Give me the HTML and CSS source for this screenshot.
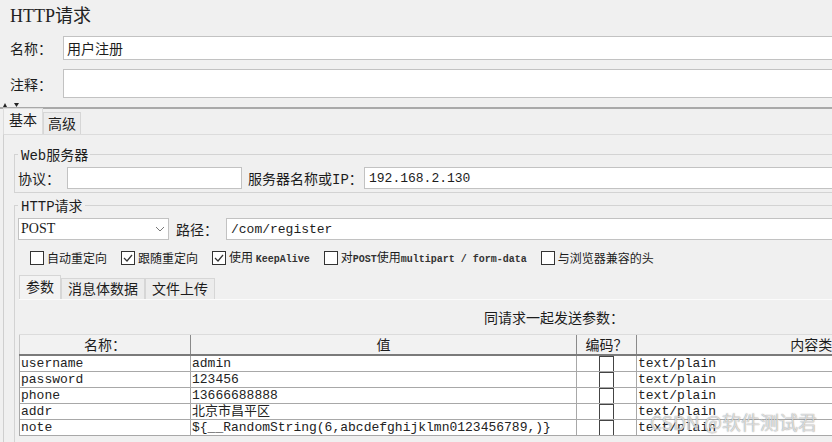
FILE: index.html
```html
<!DOCTYPE html>
<html lang="zh">
  <head>
    <meta charset="UTF-8" />
    <title>HTTP请求</title>
    <link rel="stylesheet" href="styles.css">
  </head>
  <body>
    <div class="page">
      <h1 class="title">HTTP请求</h1>

      <!-- name / comment -->
      <div class="row row-name">
        <span class="label">名称：</span>
        <div class="field">用户注册</div>
      </div>
      <div class="row row-note">
        <span class="label">注释：</span>
        <div class="field"></div>
      </div>

      <div class="splitter">
        <svg width="20" height="5" viewBox="0 0 20 5">
          <path d="M3 5 L5 1 L7 5 Z" fill="#222" />
          <path d="M14 1 L19 1 L16.5 5 Z" fill="#222" />
        </svg>
      </div>

      <div class="tabs">
        <span class="tab active">基本</span>
        <span class="tab">高级</span>
      </div>

      <div class="tabpanel">
        <fieldset class="group group-web">
          <legend><span class="mono">Web</span>服务器</legend>
          <div class="line">
            <span class="lbl lbl-proto">协议：</span>
            <div class="field field-proto"></div>
            <span class="lbl lbl-server">服务器名称或<span class="mono">IP</span>：</span>
            <div class="field field-grow mono">192.168.2.130</div>
          </div>
        </fieldset>

        <fieldset class="group group-http">
          <legend><span class="mono">HTTP</span>请求</legend>
          <div class="line">
            <div class="select">
              <span>POST</span>
              <svg width="10" height="6" viewBox="0 0 10 6">
                <path d="M1 1 L5 5 L9 1" fill="none" stroke="#777" stroke-width="1" />
              </svg>
            </div>
            <span class="lbl lbl-path">路径：</span>
            <div class="field field-grow mono">/com/register</div>
          </div>

          <div class="checks">
            <label class="check"><span class="box"></span><span>自动重定向</span></label>
            <label class="check"><span class="box"><svg width="12" height="12" viewBox="0 0 12 12"><path d="M2 6 L5 9 L10 3" fill="none" stroke="#333" stroke-width="1.2" /></svg></span><span>跟随重定向</span></label>
            <label class="check"><span class="box"><svg width="12" height="12" viewBox="0 0 12 12"><path d="M2 6 L5 9 L10 3" fill="none" stroke="#333" stroke-width="1.2" /></svg></span><span>使用 <span class="tiny">KeepAlive</span></span></label>
            <label class="check"><span class="box"></span><span>对<span class="tiny">POST</span>使用<span class="tiny">multipart / form-data</span></span></label>
            <label class="check"><span class="box"></span><span>与浏览器兼容的头</span></label>
          </div>

          <div class="subtabs">
            <span class="subtab active">参数</span>
            <span class="subtab">消息体数据</span>
            <span class="subtab">文件上传</span>
          </div>

          <div class="subpanel">
            <div class="caption">同请求一起发送参数：</div>
            <table class="params">
              <colgroup>
                <col class="c-name" />
                <col class="c-value" />
                <col class="c-enc" />
                <col class="c-type" />
              </colgroup>
              <thead>
                <tr>
                  <th>名称：</th>
                  <th>值</th>
                  <th>编码？</th>
                  <th>内容类型</th>
                </tr>
              </thead>
              <tbody>
                <tr><td>username</td><td>admin</td><td class="enc"><span class="ebox"></span></td><td>text/plain</td></tr>
                <tr><td>password</td><td>123456</td><td class="enc"><span class="ebox"></span></td><td>text/plain</td></tr>
                <tr><td>phone</td><td>13666688888</td><td class="enc"><span class="ebox"></span></td><td>text/plain</td></tr>
                <tr><td>addr</td><td>北京市昌平区</td><td class="enc"><span class="ebox"></span></td><td>text/plain</td></tr>
                <tr><td>note</td><td>${__RandomString(6,abcdefghijklmn0123456789,)}</td><td class="enc"><span class="ebox"></span></td><td>text/plain</td></tr>
              </tbody>
            </table>
          </div>
        </fieldset>
      </div>
    </div>

    <div class="watermark">CSDN @软件测试君</div>
  </body>
</html>
```

FILE: styles.css
```css
body {
  margin: 0;
  background: #f0f0f0;
  font-family: "Noto Sans CJK SC", sans-serif;
  color: #1c1c1c;
  overflow: hidden;
}
.page {
  width: 1010px;
}
.mono {
  font-family: "Liberation Mono", "Noto Sans CJK SC", monospace;
}
.title {
  margin: 0;
  height: 36px;
  padding-left: 10px;
  font-family: "Liberation Serif", "Noto Sans CJK SC", serif;
  font-size: 18px;
  font-weight: normal;
  line-height: 33px;
  color: #222;
}

/* name + comment rows */
.row {
  display: flex;
  align-items: center;
  padding-left: 10px;
}
.row-name {
  height: 24px;
}
.row-note {
  height: 29px;
  margin-top: 9px;
}
.label {
  width: 53px;
  font-size: 14px;
}
.field {
  box-sizing: border-box;
  height: 100%;
  flex: 1;
  background: #fff;
  border: 1px solid #c2c2c2;
  padding-left: 3px;
  font-size: 14px;
  display: flex;
  align-items: center;
}
.splitter {
  height: 5px;
  margin-top: 4px;
  border-bottom: 2px solid #a9a9a9;
  display: flex;
}
.splitter svg {
  display: block;
}

/* main tabs */
.tabs {
  display: flex;
  align-items: flex-end;
  height: 25px;
  padding-left: 3px;
}
.tab {
  height: 21px;
  padding: 0 4px;
  border: 1px solid #d6d6d6;
  border-bottom: none;
  font-size: 14px;
  line-height: 20px;
  background: #ececec;
}
.tab.active {
  height: 25px;
  padding: 0 5px;
  background: #f3f3f3;
  border-color: #dcdcdc;
}
.tabpanel {
  margin-left: 3px;
  border-top: 1px solid #dcdcdc;
  border-left: 1px solid #cfcfcf;
  padding: 12px 0 0 10px;
}

/* grouped boxes */
.group {
  margin: 0;
  padding: 6px 0 3px 3px;
  border: 1px solid #d3d3d3;
  min-width: 0;
}
.group legend {
  display: block;
  height: 14px;
  padding: 0 2px 0 3px;
  font-size: 14px;
  line-height: 14px;
  overflow: visible;
}
.group-http {
  margin-top: 5px;
  padding-top: 6px;
  padding-bottom: 20px;
}
.line {
  display: flex;
  align-items: center;
  height: 22px;
}
.lbl {
  font-size: 14px;
  white-space: nowrap;
}
.lbl-proto {
  width: 49px;
}
.field-proto {
  flex: none;
  width: 175px;
}
.lbl-server {
  width: 116px;
  margin-left: 6px;
}
.field-grow {
  font-size: 13px;
  padding-left: 4px;
}
.select {
  box-sizing: border-box;
  width: 151px;
  height: 100%;
  background: #fff;
  border: 1px solid #c2c2c2;
  display: flex;
  align-items: center;
  justify-content: space-between;
  padding: 0 3px 0 2px;
  font-family: "Liberation Serif", serif;
  font-size: 14px;
}
.lbl-path {
  width: 50px;
  margin-left: 7px;
}

/* checkbox row */
.checks {
  display: flex;
  align-items: center;
  gap: 14px;
  height: 16px;
  margin-top: 10px;
  padding-left: 12px;
}
.check {
  display: flex;
  align-items: center;
  font-size: 12px;
  line-height: 16px;
  white-space: nowrap;
}
.box {
  box-sizing: border-box;
  width: 14px;
  height: 14px;
  margin-right: 3px;
  border: 1px solid #333;
  background: #fff;
  display: flex;
  align-items: center;
  justify-content: center;
}
.tiny {
  font-family: "Liberation Mono", monospace;
  font-size: 10px;
  font-weight: bold;
  color: #333;
}

/* parameter tabs */
.subtabs {
  display: flex;
  align-items: flex-end;
  height: 23px;
  margin: 10px 0 0 1px;
}
.subtab {
  height: 20px;
  padding: 0 6px;
  border: 1px solid #d6d6d6;
  border-bottom: none;
  font-size: 14px;
  line-height: 19px;
  background: #ececec;
}
.subtab.active {
  height: 23px;
  line-height: 21px;
  background: #f3f3f3;
}
.subpanel {
  margin-left: 1px;
  border-top: 1px solid #fbfbfb;
  padding-top: 7px;
  padding-bottom: 20px;
}
.caption {
  height: 20px;
  line-height: 20px;
  padding-left: 465px;
  font-size: 14px;
  margin-bottom: 7px;
}
.params {
  border-collapse: collapse;
  table-layout: fixed;
  width: 981px;
}
.c-name {
  width: 171px;
}
.c-value {
  width: 386px;
}
.c-enc {
  width: 60px;
}
.params th {
  height: 19px;
  padding: 0;
  font-size: 14px;
  font-weight: normal;
  background: #f2f2f2;
  border-left: 1px solid #8a8a8a;
  border-top: 1px solid #dcdcdc;
  border-bottom: 2px solid #7a7a7a;
  line-height: 19px;
}
.params th:first-child {
  border-left: 1px solid #c8c8c8;
}
.params td {
  height: 15px;
  padding: 0 0 0 1px;
  background: #fff;
  border: 1px solid #a8a8a8;
  border-top: none;
  font-family: "Liberation Mono", "Noto Sans CJK SC", monospace;
  font-size: 13px;
  line-height: 15px;
  white-space: nowrap;
  overflow: hidden;
  color: #222;
}
.params td.enc {
  padding: 0;
  text-align: center;
}
.ebox {
  display: inline-block;
  box-sizing: border-box;
  width: 15px;
  height: 15px;
  vertical-align: top;
  border: 1px solid #444;
  border-bottom: none;
  background: #fff;
}

.watermark {
  position: absolute;
  left: 650px;
  top: 410px;
  font-family: "Noto Sans CJK SC", sans-serif;
  font-size: 19px;
  line-height: 24px;
  color: rgba(255, 255, 255, 0.7);
  text-shadow: 0 0 1px rgba(60, 60, 60, 0.7);
}
```
